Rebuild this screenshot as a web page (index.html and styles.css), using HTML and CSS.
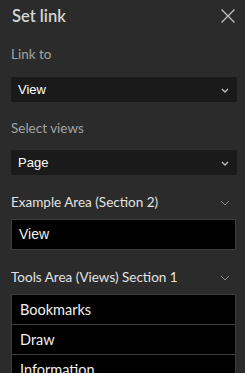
FILE: index.html
```html
<!DOCTYPE html>
<html lang="en">
<head>
  <meta charset="UTF-8" />
  <title>Set link</title>
  <link rel="stylesheet" href="styles.css">
</head>
<body>
  <div class="panel">
    <header class="panel-header">
      <h1>Set link</h1>
      <button class="close-btn" aria-label="Close">
        <svg width="14" height="14" viewBox="0 0 14 14"><path d="M0.5 0.5 L13.5 13.5 M13.5 0.5 L0.5 13.5" stroke="#c4c4c4" stroke-width="1.2" fill="none"/></svg>
      </button>
    </header>

    <div class="field">
      <label class="field-label">Link to</label>
      <div class="select">
        <span>View</span>
        <svg class="chev" width="8" height="5" viewBox="0 0 8 5"><path d="M1 1 L4 4 L7 1" stroke="#bdbdbd" stroke-width="1.3" fill="none"/></svg>
      </div>
    </div>

    <div class="field field-second">
      <label class="field-label">Select views</label>
      <div class="select">
        <span>Page</span>
        <svg class="chev" width="8" height="5" viewBox="0 0 8 5"><path d="M1 1 L4 4 L7 1" stroke="#bdbdbd" stroke-width="1.3" fill="none"/></svg>
      </div>
    </div>

    <div class="section">
      <div class="section-head">
        <span>Example Area (Section 2)</span>
        <svg width="10" height="6" viewBox="0 0 10 6"><path d="M1 1 L5 5 L9 1" stroke="#8a8a8a" stroke-width="1" fill="none"/></svg>
      </div>
      <ul class="view-list">
        <li class="plain">View</li>
      </ul>
    </div>

    <div class="section">
      <div class="section-head">
        <span>Tools Area (Views) Section 1</span>
        <svg width="10" height="6" viewBox="0 0 10 6"><path d="M1 1 L5 5 L9 1" stroke="#8a8a8a" stroke-width="1" fill="none"/></svg>
      </div>
      <ul class="view-list">
        <li>Bookmarks</li>
        <li>Draw</li>
        <li>Information</li>
      </ul>
    </div>
  </div>
</body>
</html>
```

FILE: styles.css
```css
body {
  margin: 0;
  background-color: #2b2b2b;
  font-family: Lato, "Open Sans", sans-serif;
  overflow: hidden;
}

.panel {
  display: flex;
  flex-direction: column;
  padding: 0 8px 0 11px;
}

.panel-header {
  display: flex;
  align-items: center;
  justify-content: space-between;
  height: 32px;
  padding-left: 1px;
}

.panel-header h1 {
  margin: 0;
  font-size: 16.5px;
  font-weight: 600;
  color: #d6d6d6;
}

.close-btn {
  background: none;
  border: none;
  padding: 0;
  margin-right: 2px;
  width: 14px;
  height: 14px;
  display: flex;
}

.field {
  margin-top: 14px;
}

.field-second {
  margin-top: 18px;
}

.field-label {
  display: block;
  font-size: 13.5px;
  line-height: 16px;
  color: #a3a3a3;
  margin-bottom: 14px;
}

.field:first-of-type .field-label {
  margin-bottom: 15px;
}

.select {
  height: 25px;
  background: #1a1a1a;
  border-radius: 2px;
  display: flex;
  align-items: center;
  justify-content: space-between;
  padding: 0 8px 0 7px;
  font-family: "Liberation Sans", Arial, sans-serif;
  font-size: 13px;
  color: #ffffff;
}

.chev {
  margin-top: 2px;
}

.section {
  margin-top: 19px;
}

.section-head {
  display: flex;
  align-items: center;
  justify-content: space-between;
  height: 16px;
  font-size: 13.5px;
  color: #e2e2e2;
  padding-right: 7px;
  margin-bottom: 9px;
}

.section-head svg {
  margin-top: 1px;
}

.view-list {
  list-style: none;
  margin: 0;
  padding: 0;
  margin-right: 1px;
}

.view-list li {
  height: 29px;
  line-height: 29px;
  background: #000000;
  border: 1px solid #3d3d3d;
  margin-top: -1px;
  padding-left: 8px;
  font-size: 14.5px;
  color: #f0f0f0;
}

.view-list li:first-child {
  margin-top: 0;
}

.view-list li.plain {
  font-family: "Liberation Sans", Arial, sans-serif;
  font-size: 14px;
  padding-left: 7px;
}
```
